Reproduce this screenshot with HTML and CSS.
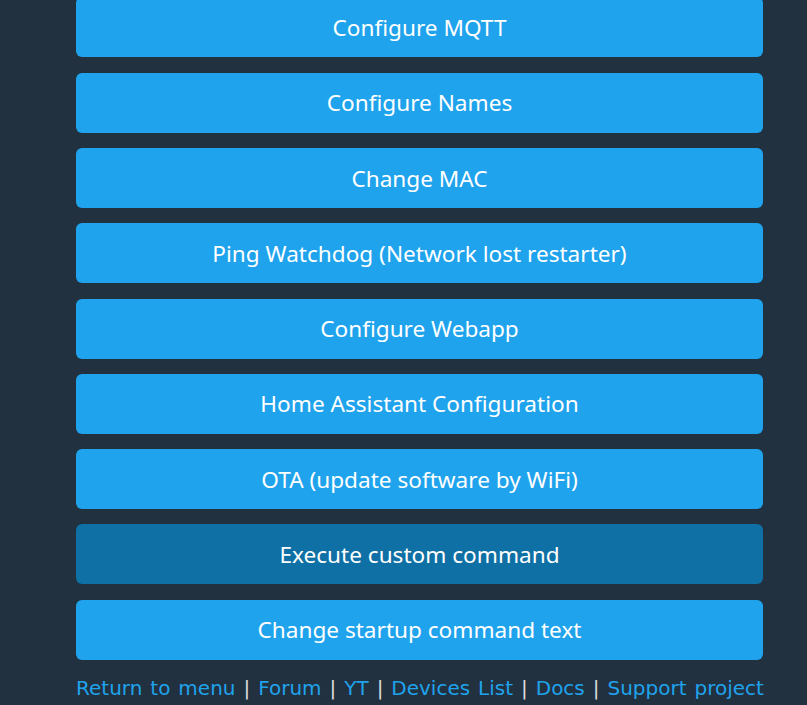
FILE: index.html
```html
<!DOCTYPE html>
<html lang="en">
<head>
  <meta charset="UTF-8">
  <meta name="viewport" content="width=device-width, initial-scale=1.0">
  <title>Configuration</title>
  <link rel="stylesheet" href="styles.css">
</head>
<body>
  <div class="menu">
    <button>Configure MQTT</button>
    <button>Configure Names</button>
    <button>Change MAC</button>
    <button>Ping Watchdog (Network lost restarter)</button>
    <button>Configure Webapp</button>
    <button>Home Assistant Configuration</button>
    <button>OTA (update software by WiFi)</button>
    <button class="active">Execute custom command</button>
    <button>Change startup command text</button>
    <div class="footer">
      <a href="#">Return to menu</a> | <a href="#">Forum</a> | <a href="#">YT</a> | <a href="#">Devices List</a> | <a href="#">Docs</a> | <a href="#">Support project</a>
    </div>
  </div>
</body>
</html>
```

FILE: styles.css
```css
body {
  margin: 0;
  padding: 0;
  background-color: #22313f;
  font-family: "DejaVu Sans", Verdana, sans-serif;
  color: #ddd;
}
.menu {
  width: 687px;
  margin: -2.6px 0 0 76px;
}
.menu button {
  display: block;
  width: 100%;
  height: 60px;
  margin-bottom: 15.3px;
  border: none;
  border-radius: 6px;
  background-color: #1fa3ec;
  color: white;
  font-family: "Noto Sans", sans-serif;
  font-size: 22.6px;
  cursor: pointer;
}
.menu button.active {
  background-color: #0e70a4;
}
.footer {
  margin-top: 0;
  font-size: 20px;
  line-height: 26px;
  word-spacing: 1.6px;
  white-space: nowrap;
}
.footer a {
  color: #1fa3ec;
  text-decoration: none;
}
```
